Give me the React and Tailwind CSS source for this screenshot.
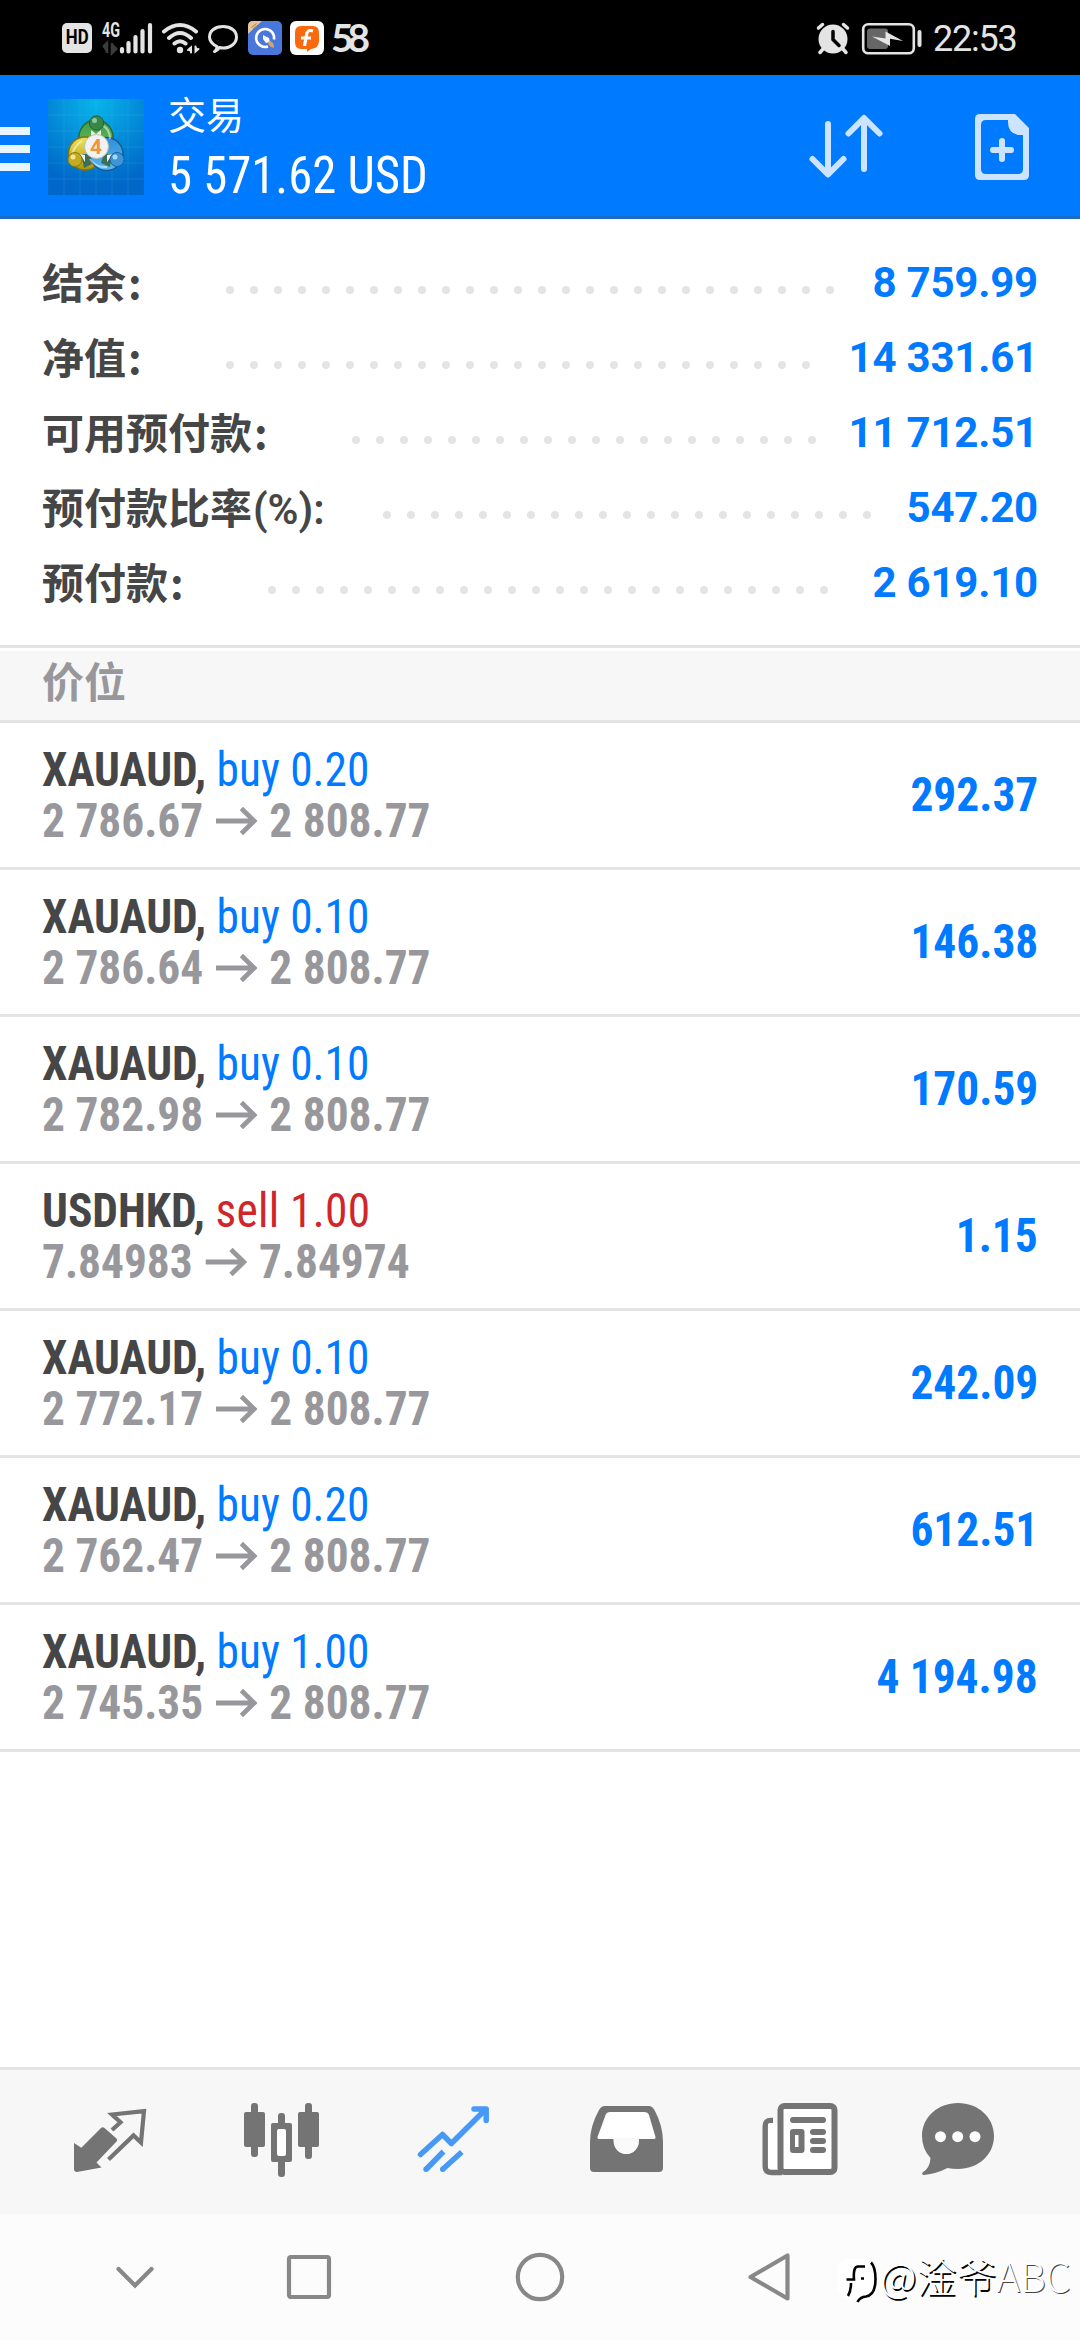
const summary = [
  { label: "结余", value: "8 759.99", dots: 26, width: "w-[184px]" },
  { label: "净值", value: "14 331.61", dots: 25, width: "w-[184px]" },
  { label: "可用预付款", value: "11 712.51", dots: 20, width: "w-[310px]" },
  { label: "预付款比率", suffix: "(%):", value: "547.20", dots: 21, width: "w-[341px]" },
  { label: "预付款", value: "2 619.10", dots: 24, width: "w-[226px]" },
];

const positions = [
  { symbol: "XAUAUD", side: "buy", volume: "0.20", open: "2 786.67", price: "2 808.77", profit: "292.37" },
  { symbol: "XAUAUD", side: "buy", volume: "0.10", open: "2 786.64", price: "2 808.77", profit: "146.38" },
  { symbol: "XAUAUD", side: "buy", volume: "0.10", open: "2 782.98", price: "2 808.77", profit: "170.59" },
  { symbol: "USDHKD", side: "sell", volume: "1.00", open: "7.84983", price: "7.84974", profit: "1.15" },
  { symbol: "XAUAUD", side: "buy", volume: "0.10", open: "2 772.17", price: "2 808.77", profit: "242.09" },
  { symbol: "XAUAUD", side: "buy", volume: "0.20", open: "2 762.47", price: "2 808.77", profit: "612.51" },
  { symbol: "XAUAUD", side: "buy", volume: "1.00", open: "2 745.35", price: "2 808.77", profit: "4 194.98" },
];

function StatusBar() {
  return (
    <div className="h-[75px] bg-black flex items-center text-[#e4e4e4]">
      <div className="ml-[62px] w-[30px] h-[30px] rounded-[5px] bg-[#e4e4e4] text-black text-[21px] font-bold flex items-center justify-center">
        <span className="scale-x-[0.8]">HD</span>
      </div>
      <svg className="ml-[8px]" width="56" height="48" viewBox="100 13 56 48" fill="#e4e4e4">
        <text x="102" y="36" fontSize="20" fontWeight="bold" textLength="18" lengthAdjust="spacingAndGlyphs">4G</text>
        <path d="M103 46l4-4v10M112 42v10l5-5" stroke="#3c3c3c" strokeWidth="2.5" fill="#3c3c3c" />
        <path d="M122 48v2.500M128.500 42v8.500M135.500 36v14.500M142.500 30v20.500M150 24v26.500" stroke="#e4e4e4" strokeWidth="4.200" strokeLinecap="round" />
      </svg>
      <svg className="ml-[4px]" width="42" height="36" viewBox="160 19 42 36" fill="none" stroke="#e4e4e4" strokeWidth="4" strokeLinecap="round">
        <path d="M164 30.500Q180 17.500 196 30.500M169 37Q180 27 191 37M174.500 42.500Q180 38 185.500 42.500" />
        <circle cx="180" cy="49" r="3.200" fill="#e4e4e4" stroke="none" />
        <path d="M188 49l3-2.500v5M195.500 45.500v5l3-2.500" strokeWidth="2" fill="#e4e4e4" />
      </svg>
      <svg className="ml-[4px]" width="34" height="36" viewBox="206 19 34 36" fill="none" stroke="#e4e4e4" strokeWidth="3" strokeLinejoin="round">
        <path d="M214.500 50.500Q217 49 217 45.500C212 43 209.500 40 209.500 36C209.500 30 215 25.500 223 25.500S236.500 30 236.500 36S231 47 223 47Q221 47 219.500 46.500Q218 49 214.500 50.500Z" />
      </svg>
      <svg className="ml-[8px]" width="34" height="34" viewBox="0 0 34 34">
        <rect width="34" height="34" rx="5" fill="#4a77dc" />
        <path d="M5 0H14L0 13V5Q0 0 5 0Z" fill="#e7c49a" />
        <path d="M3.500 6.500l5-4M5 8l5-4" stroke="#a67b4c" strokeWidth="1" />
        <path d="M20 25.500A9 9 0 1 1 26 18.500" fill="none" stroke="#fff" strokeWidth="2.600" />
        <path d="M15 14l6 3 1 4-4 1-3-4z" fill="#fff" />
        <path d="M21 20q5 0 5 7-5-1-6-5z" fill="#d6a56b" />
      </svg>
      <svg className="ml-[8px]" width="34" height="34" viewBox="0 0 34 34">
        <rect width="34" height="34" rx="6" fill="#fff" />
        <path d="M11 5H23Q29 5 29 12V20Q29 27 21 28L17 31V28H11Q5 28 5 21V12Q5 5 11 5Z" fill="#f9690e" />
        <path d="M23 10Q17 8 16.500 14L14.500 25M11 17H21" fill="none" stroke="#fff" strokeWidth="3.200" />
      </svg>
      <span className="ml-[7px] w-[34px] font-['Lato'] text-[39px] leading-none font-bold tracking-[-6px]">58</span>

      <svg className="ml-auto" width="36" height="36" viewBox="815 19 36 36">
        <circle cx="833" cy="38" r="14.500" fill="#e4e4e4" />
        <path d="M818.500 27l4-3.500M847.500 27l-4-3.500M823 48l-3 3.500M843 48l3 3.500" stroke="#e4e4e4" strokeWidth="3.500" strokeLinecap="round" />
        <path d="M833 30.500v8l6 6" stroke="#000" strokeWidth="3.500" fill="none" strokeLinecap="round" />
      </svg>
      <svg className="ml-[9px]" width="64" height="36" viewBox="860 19 64 36">
        <rect x="863.200" y="23.200" width="50.600" height="29" rx="5" fill="none" stroke="#e4e4e4" strokeWidth="2.600" />
        <rect x="867" y="27.500" width="21" height="20.500" rx="3" fill="#666" />
        <path d="M872 35.500L885.500 37.500V30.500L903 40L890 37.800V45Z" fill="#e4e4e4" />
        <rect x="917.500" y="29" width="4" height="17" rx="2" fill="#e4e4e4" />
      </svg>
      <span className="ml-[9px] mr-[61px] w-[86px] h-[40px] text-[36px] leading-[42px] tracking-[-1.2px] whitespace-nowrap">22:53</span>
    </div>
  );
}

function AppLogo() {
  return (
    <svg width="96" height="96" viewBox="0 0 96 96">
      <defs>
        <radialGradient id="sky" cx="50%" cy="5%" r="85%">
          <stop offset="0" stopColor="#08b4ea" />
          <stop offset="1" stopColor="#0068c8" />
        </radialGradient>
        <linearGradient id="green" x2="0" y2="1">
          <stop offset="0" stopColor="#3f9a4c" />
          <stop offset="1" stopColor="#74c35a" />
        </linearGradient>
        <linearGradient id="gold" x2="0" y2="1">
          <stop offset="0" stopColor="#f0e45a" />
          <stop offset="1" stopColor="#a89410" />
        </linearGradient>
        <linearGradient id="blue" x2="0" y2="1">
          <stop offset="0" stopColor="#2f8fd6" />
          <stop offset="1" stopColor="#5cb8f0" />
        </linearGradient>
      </defs>
      <rect width="96" height="96" fill="url(#sky)" />
      <path d="M16 0V96M32 0V96M48 0V96M64 0V96M80 0V96M0 16H96M0 32H96M0 48H96M0 64H96M0 80H96" stroke="#5cc3f5" strokeOpacity=".18" />
      <circle cx="48" cy="38" r="17" fill="url(#green)" stroke="#286b35" strokeWidth="1.500" />
      <circle cx="37" cy="54.500" r="16.500" fill="url(#gold)" stroke="#7c7414" strokeWidth="1.500" />
      <circle cx="58.500" cy="55" r="16.500" fill="url(#blue)" stroke="#155b98" strokeWidth="1.500" />
      <path d="M33 55h8l3 10-8 4zM64 55h-8l-3 9 9 4z" fill="#3c6f58" />
      <path d="M32 55l5 1v7zM65 55l-6 1v7z" fill="#f2f6ee" />
      <path d="M34 42Q26 47 24 56M59 68Q48 69 42 60M54 26Q62 30 62 40" fill="none" stroke="#fff" strokeOpacity=".5" strokeWidth="2" />
      <circle cx="48.500" cy="24" r="7.200" fill="#38874a" stroke="#216333" />
      <circle cx="27" cy="60.500" r="7" fill="#c2ad22" stroke="#8b7a10" />
      <circle cx="69" cy="60.500" r="7" fill="#3d94d6" stroke="#1a629e" />
      <circle cx="46.500" cy="21.500" r="2.500" fill="#8fc79a" />
      <circle cx="25" cy="58" r="2.500" fill="#f1e88d" />
      <circle cx="67" cy="58" r="2.500" fill="#a8d7f8" />
      <path d="M43 31l5 4 5-4v6H43z" fill="#e9f3e4" />
      <circle cx="48.500" cy="47.500" r="12" fill="#f2f2f2" stroke="#b9c0b0" />
      <text x="48" y="55" textAnchor="middle" fontSize="21" fontWeight="bold" fill="#f0943c">4</text>
    </svg>
  );
}

function Header() {
  return (
    <header className="h-[144px] bg-[#007aff] border-b-[3px] border-[#1a6cc4] flex items-start text-white">
      <div className="mt-[52px] w-[30px] flex flex-col gap-[10px]">
        <span className="h-2 bg-[#e6f5ff]" />
        <span className="h-2 bg-[#e6f5ff]" />
        <span className="h-2 bg-[#e6f5ff]" />
      </div>
      <div className="ml-[18px] mt-6">
        <AppLogo />
      </div>
      <div className="ml-[24px] mt-[18px] w-[400px]">
        <div className="text-[38px] leading-[40px] h-[40px] font-['Noto_Sans_CJK_SC',sans-serif]">交易</div>
        <div className="mt-[13px] text-[51px] leading-[60px] origin-left scale-x-[0.955] font-stretch-condensed whitespace-nowrap">5 571.62 USD</div>
      </div>
      <svg className="ml-auto mt-[30px]" width="80" height="78" viewBox="806 105 80 78" fill="none" stroke="#cce4ff" strokeWidth="6" strokeLinecap="round" strokeLinejoin="round">
        <path d="M828 124V174M812.500 159L828 174.500L843.500 159" />
        <path d="M864 169V119M848.500 133.500L864 118L879.500 133.500" />
      </svg>
      <svg className="ml-[84px] mr-[46px] mt-[34px]" width="64" height="74" viewBox="970 109 64 74">
        <path d="M980 114H1015L1029 128V175Q1029 180 1024 180H980Q975 180 975 175V119Q975 114 980 114ZM986 120Q981 120 981 125V169Q981 174 986 174H1018Q1023 174 1023 169V135H1018Q1008 133 1008 122V120Z" fill="#cce4ff" fillRule="evenodd" />
        <path d="M1002 141V159M993 150H1011" stroke="#cce4ff" strokeWidth="6" strokeLinecap="round" />
      </svg>
    </header>
  );
}

function SummaryRow({ row }) {
  return (
    <div className="h-[75px] flex items-center">
      <div className={`${row.width} h-[64px] leading-[60px] shrink-0 whitespace-nowrap text-[#464646] font-bold font-['Noto_Sans_CJK_SC',sans-serif]`}>
        {row.label}
        {row.suffix ? (
          <span className="ml-[1px] font-['Roboto'] font-semibold">{row.suffix}</span>
        ) : (
          <span className="ml-[2px]">:</span>
        )}
      </div>
      <div className="flex gap-4 mt-[15px]">
        {Array.from({ length: row.dots }, (_, i) => (
          <span key={i} className="size-2 rounded-full bg-[#e4e4e4]" />
        ))}
      </div>
      <div className="ml-auto font-bold tracking-[-0.2px] text-[#007aff] whitespace-nowrap">{row.value}</div>
    </div>
  );
}

function PositionRow({ item }) {
  return (
    <div className="h-[147px] border-b-[3px] border-[#e4e4e4] px-[42px] flex items-center justify-between text-[48px] leading-[51px] font-stretch-condensed whitespace-nowrap">
      <div className="origin-left scale-x-[0.945]">
        <div>
          <span className="font-bold text-[#464646]">{item.symbol}, </span>
          <span className={item.side === "buy" ? "text-[#007aff]" : "text-[#d0262a] tracking-[0.3px]"}>
            {item.side} {item.volume}
          </span>
        </div>
        <div className="flex items-center font-bold text-[#97979c]">
          {item.open}
          <svg className="mx-[13px]" width="44" height="30" viewBox="0 0 44 30" fill="none" stroke="#97979c" strokeWidth="5">
            <path d="M0 15H40M27 2.500L40.500 15L27 27.500" />
          </svg>
          {item.price}
        </div>
      </div>
      <div className="font-bold text-[#007aff] -mt-[2px] origin-right scale-x-[0.945]">{item.profit}</div>
    </div>
  );
}

function TabBar() {
  return (
    <div className="h-[147px] border-t-[3px] border-[#e4e4e4] bg-[#f7f7f7] flex">
      {/* quotes */}
      <svg width="180" height="144" viewBox="0 0 180 144">
        <path d="M74 73L81.300 77.700L101 58Q102.600 56.500 104.500 58L116.500 68.500Q118 70 116.500 71.500L96.500 92.500L101.500 97.500L77 102Q74 102 74 99Z" fill="#747474" />
        <path d="M112 60L120.500 52.200L112 44.500L144 41.200L141 72.500L133.500 65.500L108.500 89.500" fill="none" stroke="#747474" strokeWidth="4.200" />
      </svg>
      {/* charts */}
      <svg width="180" height="144" viewBox="0 0 180 144" fill="#747474">
        <rect x="64" y="42" width="21" height="35" rx="2" />
        <rect x="71" y="33" width="7" height="54" rx="3" />
        <rect x="118" y="42" width="21" height="35" rx="2" />
        <rect x="125" y="33" width="7" height="56" rx="3" />
        <rect x="98" y="43" width="7" height="64" rx="3" />
        <rect x="91" y="53" width="21" height="39" rx="2" />
        <rect x="97" y="59" width="9" height="27" rx="2" fill="#fff" />
      </svg>
      {/* trade */}
      <svg width="180" height="144" viewBox="0 0 180 144" fill="none" stroke="#4799f7" strokeWidth="5.500">
        <path d="M60.500 84.500L82.500 64.500L91.400 73.500L125.500 39.500M114 39H126.200V50.500" strokeLinecap="round" strokeLinejoin="round" />
        <path d="M66 99.500L83.500 81.500M82.500 99.500L101.800 82" />
        <circle cx="66" cy="99.300" r="2.700" fill="#4799f7" stroke="none" />
        <circle cx="82.700" cy="99.300" r="2.700" fill="#4799f7" stroke="none" />
      </svg>
      {/* history */}
      <svg width="180" height="144" viewBox="0 0 180 144">
        <path d="M69 40H106L117 70H57Z" fill="#fff" />
        <path d="M64.500 36H109Q112 36 114.500 40Q123 56 123 72V98Q123 102 119 102H54Q50 102 50 98V72Q50 56 59 40Q61.500 36 64.500 36ZM70 42Q66.500 42 65.500 45L57.500 67Q57 69 59 69H73.700V71A12.500 13 0 0 0 98.800 71V69H114Q116 69 115.500 67L109 45Q108 42 104 42Z" fill="#747474" fillRule="evenodd" />
        <path d="M73.700 68V71A12.500 13 0 0 0 98.800 71V68Z" fill="#fafafa" />
      </svg>
      {/* news */}
      <svg width="180" height="144" viewBox="0 0 180 144" fill="#747474">
        <path d="M53 50.500H51Q45.200 50.500 45.200 56.500V96Q45.200 102.500 51 102.500H62" fill="none" stroke="#747474" strokeWidth="5.400" />
        <rect x="48" y="53" width="10" height="46" rx="2" fill="#fff" />
        <rect x="60.500" y="36" width="54" height="66" rx="4" fill="#fff" stroke="#747474" strokeWidth="6" />
        <rect x="70" y="47" width="36" height="6" rx="3" />
        <rect x="70" y="59" width="14.500" height="24" rx="3" />
        <rect x="75" y="65" width="3.500" height="12" fill="#fff" />
        <rect x="90" y="59" width="16" height="6" rx="3" />
        <rect x="90" y="68" width="16" height="6" rx="3" />
        <rect x="90" y="77" width="16" height="6" rx="3" />
      </svg>
      {/* messages */}
      <svg width="180" height="144" viewBox="0 0 180 144" fill="#747474">
        <path d="M58 33C38 33 22 47 22 66Q22 79 30.500 88Q30 98 22.500 102.500Q21.500 105 24 105Q37 103.500 47.500 98Q52 99 58 99C78 99 94 85 94 66S78 33 58 33Z" />
        <g fill="#fff">
          <circle cx="40.500" cy="66.700" r="5.500" />
          <circle cx="57.700" cy="66.700" r="5.500" />
          <circle cx="75" cy="66.700" r="5.500" />
        </g>
      </svg>
    </div>
  );
}

function NavBar() {
  return (
    <div className="h-[126px] bg-[#fcfcfc] flex items-center">
      <svg className="ml-[110px]" width="50" height="50" viewBox="0 0 50 50" fill="none" stroke="#888" strokeWidth="4.200" strokeLinecap="round">
        <path d="M8.500 17L25 33.500L41.500 17" />
      </svg>
      <svg className="ml-[124px]" width="50" height="50" viewBox="0 0 50 50" fill="none" stroke="#888" strokeWidth="4.200">
        <rect x="5" y="5" width="40" height="40" rx="2" />
      </svg>
      <svg className="ml-[181px]" width="50" height="50" viewBox="0 0 50 50" fill="none" stroke="#888" strokeWidth="4.200">
        <circle cx="25" cy="25" r="22.200" />
      </svg>
      <svg className="ml-[180px]" width="50" height="50" viewBox="0 0 50 50" fill="none" stroke="#888" strokeWidth="4.200" strokeLinejoin="round">
        <path d="M42.500 3.500V46.500L5.500 25Z" />
      </svg>
      <svg className="ml-[43px] mt-[6px]" width="42" height="50" viewBox="838 2256 42 50" fill="none">
        <rect x="838" y="2260" width="38" height="40" rx="10" fill="#fff" />
        <path d="M848 2297Q851 2292 851 2284M846.500 2280.500H854Q853 2267.500 858 2267.500H865M861 2279.500H864M871 2263.500Q875.500 2268 875.500 2280Q875.500 2296 866 2297.500Q860 2298 857.500 2303" stroke="#000" strokeWidth="2.600" />
      </svg>
      <div className="-mt-[4px] text-[40px] font-light text-white whitespace-nowrap font-['Noto_Sans_CJK_SC',sans-serif] [text-shadow:1.500px_1.500px_0.500px_#000]">
        @淦爷<span className="[text-shadow:1px_1px_0px_#444]">ABC</span>
      </div>
    </div>
  );
}

export default function App() {
  return (
    <div className="w-[1080px] h-[2340px] bg-white flex flex-col font-['Roboto',sans-serif] overflow-hidden">
      <StatusBar />
      <Header />
      <div className="h-[426px] pt-[26px] px-[42px] text-[42px] leading-[60px]">
        {summary.map((row) => (
          <SummaryRow key={row.label} row={row} />
        ))}
      </div>
      <div className="h-[78px] border-y-[3px] border-[#e4e4e4] pt-[3px]">
        <div className="h-[69px] bg-[#f7f7f7] px-[42px] text-[42px] leading-[58px] font-bold text-[#97979c] font-['Noto_Sans_CJK_SC',sans-serif]">
          价位
        </div>
      </div>
      {positions.map((item, i) => (
        <PositionRow key={i} item={item} />
      ))}
      <div className="grow" />
      <TabBar />
      <NavBar />
    </div>
  );
}
